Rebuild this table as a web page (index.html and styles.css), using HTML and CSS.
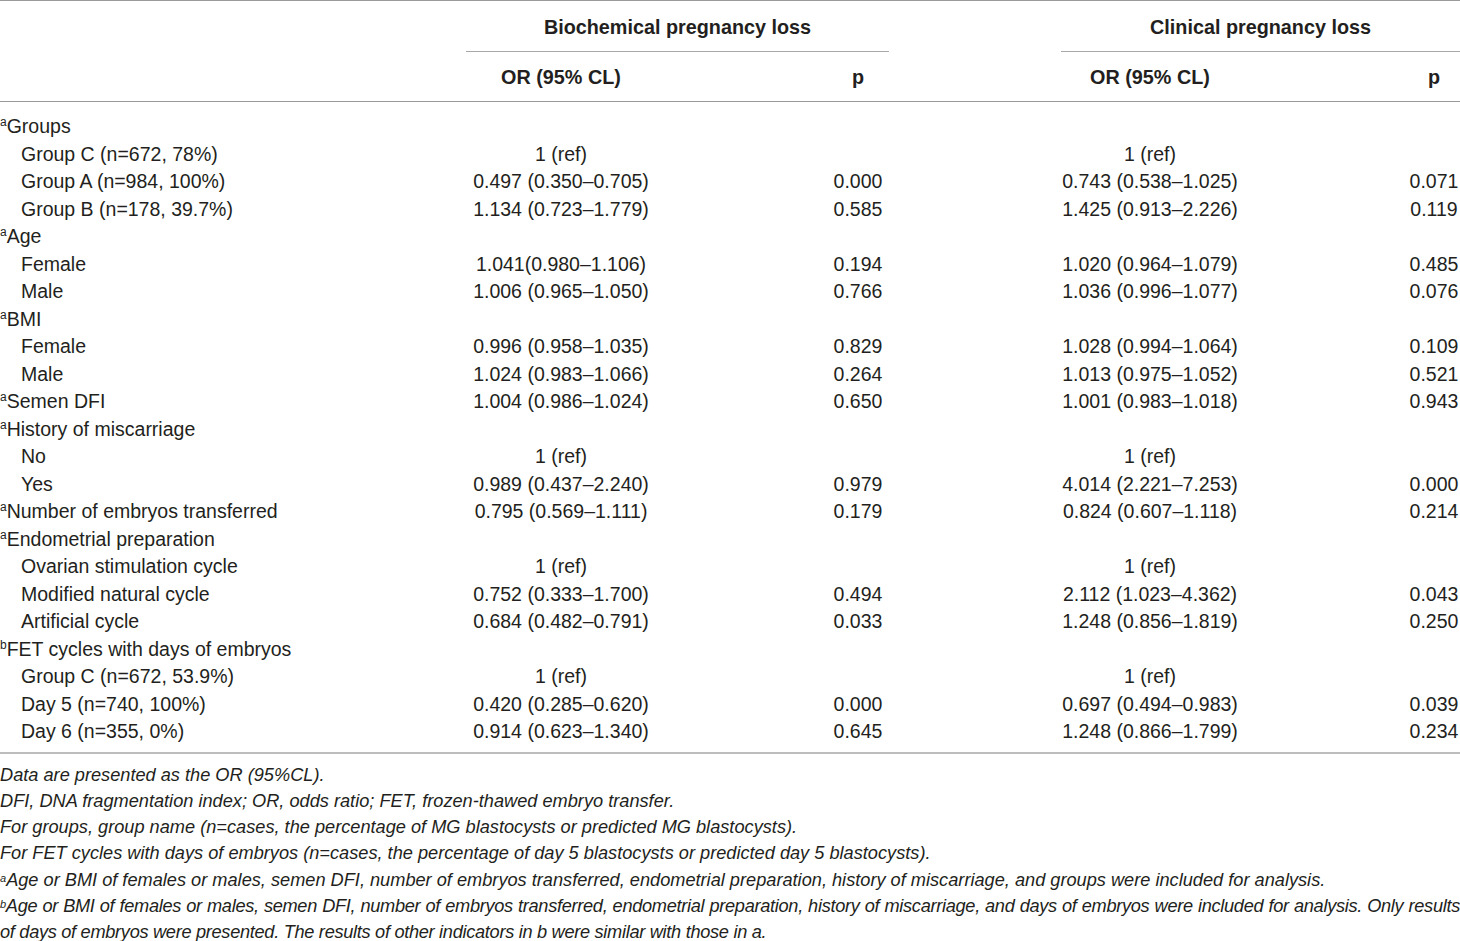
FILE: index.html
```html
<!DOCTYPE html>
<html lang="en">
<head>
<meta charset="utf-8">
<title>Table</title>
<link rel="stylesheet" href="styles.css">
</head>
<body>
<div class="page">
<table class="tbl">
  <colgroup>
    <col class="c-label">
    <col class="c-or1">
    <col class="c-sp1">
    <col class="c-p1">
    <col class="c-gap">
    <col class="c-or2">
    <col class="c-sp2">
    <col class="c-p2">
  </colgroup>
  <thead>
    <tr class="h1">
      <th></th>
      <th colspan="3" class="grp">Biochemical pregnancy loss</th>
      <th></th>
      <th colspan="3" class="grp">Clinical pregnancy loss</th>
    </tr>
    <tr class="h2">
      <th></th>
      <th class="ctr">OR (95% CL)</th>
      <th></th>
      <th class="ctr">p</th>
      <th></th>
      <th class="ctr">OR (95% CL)</th>
      <th></th>
      <th class="ctr">p</th>
    </tr>
  </thead>
  <tbody>
    <tr class="first"><td class="lbl"><sup>a</sup>Groups</td><td></td><td></td><td></td><td></td><td></td><td></td><td></td></tr>
    <tr><td class="lbl in">Group C (n=672, 78%)</td><td class="ctr">1 (ref)</td><td></td><td></td><td></td><td class="ctr">1 (ref)</td><td></td><td></td></tr>
    <tr><td class="lbl in">Group A (n=984, 100%)</td><td class="ctr">0.497 (0.350–0.705)</td><td></td><td class="ctr">0.000</td><td></td><td class="ctr">0.743 (0.538–1.025)</td><td></td><td class="ctr">0.071</td></tr>
    <tr><td class="lbl in">Group B (n=178, 39.7%)</td><td class="ctr">1.134 (0.723–1.779)</td><td></td><td class="ctr">0.585</td><td></td><td class="ctr">1.425 (0.913–2.226)</td><td></td><td class="ctr">0.119</td></tr>
    <tr><td class="lbl"><sup>a</sup>Age</td><td></td><td></td><td></td><td></td><td></td><td></td><td></td></tr>
    <tr><td class="lbl in">Female</td><td class="ctr">1.041(0.980–1.106)</td><td></td><td class="ctr">0.194</td><td></td><td class="ctr">1.020 (0.964–1.079)</td><td></td><td class="ctr">0.485</td></tr>
    <tr><td class="lbl in">Male</td><td class="ctr">1.006 (0.965–1.050)</td><td></td><td class="ctr">0.766</td><td></td><td class="ctr">1.036 (0.996–1.077)</td><td></td><td class="ctr">0.076</td></tr>
    <tr><td class="lbl"><sup>a</sup>BMI</td><td></td><td></td><td></td><td></td><td></td><td></td><td></td></tr>
    <tr><td class="lbl in">Female</td><td class="ctr">0.996 (0.958–1.035)</td><td></td><td class="ctr">0.829</td><td></td><td class="ctr">1.028 (0.994–1.064)</td><td></td><td class="ctr">0.109</td></tr>
    <tr><td class="lbl in">Male</td><td class="ctr">1.024 (0.983–1.066)</td><td></td><td class="ctr">0.264</td><td></td><td class="ctr">1.013 (0.975–1.052)</td><td></td><td class="ctr">0.521</td></tr>
    <tr><td class="lbl"><sup>a</sup>Semen DFI</td><td class="ctr">1.004 (0.986–1.024)</td><td></td><td class="ctr">0.650</td><td></td><td class="ctr">1.001 (0.983–1.018)</td><td></td><td class="ctr">0.943</td></tr>
    <tr><td class="lbl"><sup>a</sup>History of miscarriage</td><td></td><td></td><td></td><td></td><td></td><td></td><td></td></tr>
    <tr><td class="lbl in">No</td><td class="ctr">1 (ref)</td><td></td><td></td><td></td><td class="ctr">1 (ref)</td><td></td><td></td></tr>
    <tr><td class="lbl in">Yes</td><td class="ctr">0.989 (0.437–2.240)</td><td></td><td class="ctr">0.979</td><td></td><td class="ctr">4.014 (2.221–7.253)</td><td></td><td class="ctr">0.000</td></tr>
    <tr><td class="lbl"><sup>a</sup>Number of embryos transferred</td><td class="ctr">0.795 (0.569–1.111)</td><td></td><td class="ctr">0.179</td><td></td><td class="ctr">0.824 (0.607–1.118)</td><td></td><td class="ctr">0.214</td></tr>
    <tr><td class="lbl"><sup>a</sup>Endometrial preparation</td><td></td><td></td><td></td><td></td><td></td><td></td><td></td></tr>
    <tr><td class="lbl in">Ovarian stimulation cycle</td><td class="ctr">1 (ref)</td><td></td><td></td><td></td><td class="ctr">1 (ref)</td><td></td><td></td></tr>
    <tr><td class="lbl in">Modified natural cycle</td><td class="ctr">0.752 (0.333–1.700)</td><td></td><td class="ctr">0.494</td><td></td><td class="ctr">2.112 (1.023–4.362)</td><td></td><td class="ctr">0.043</td></tr>
    <tr><td class="lbl in">Artificial cycle</td><td class="ctr">0.684 (0.482–0.791)</td><td></td><td class="ctr">0.033</td><td></td><td class="ctr">1.248 (0.856–1.819)</td><td></td><td class="ctr">0.250</td></tr>
    <tr><td class="lbl"><sup>b</sup>FET cycles with days of embryos</td><td></td><td></td><td></td><td></td><td></td><td></td><td></td></tr>
    <tr><td class="lbl in">Group C (n=672, 53.9%)</td><td class="ctr">1 (ref)</td><td></td><td></td><td></td><td class="ctr">1 (ref)</td><td></td><td></td></tr>
    <tr><td class="lbl in">Day 5 (n=740, 100%)</td><td class="ctr">0.420 (0.285–0.620)</td><td></td><td class="ctr">0.000</td><td></td><td class="ctr">0.697 (0.494–0.983)</td><td></td><td class="ctr">0.039</td></tr>
    <tr class="last"><td class="lbl in">Day 6 (n=355, 0%)</td><td class="ctr">0.914 (0.623–1.340)</td><td></td><td class="ctr">0.645</td><td></td><td class="ctr">1.248 (0.866–1.799)</td><td></td><td class="ctr">0.234</td></tr>
  </tbody>
</table>
<div class="notes">
  <p>Data are presented as the OR (95%CL).</p>
  <p>DFI, DNA fragmentation index; OR, odds ratio; FET, frozen-thawed embryo transfer.</p>
  <p>For groups, group name (n=cases, the percentage of MG blastocysts or predicted MG blastocysts).</p>
  <p>For FET cycles with days of embryos (n=cases, the percentage of day 5 blastocysts or predicted day 5 blastocysts).</p>
  <p><sup>a</sup>Age or BMI of females or males, semen DFI, number of embryos transferred, endometrial preparation, history of miscarriage, and groups were included for analysis.</p>
  <p class="just"><sup>b</sup>Age or BMI of females or males, semen DFI, number of embryos transferred, endometrial preparation, history of miscarriage, and days of embryos were included for analysis. Only results of&nbsp;days of embryos were presented. The results of other indicators in b were similar with those in a.</p>
</div>
</div>
</body>
</html>
```
FILE: styles.css
```css
html, body {
  margin: 0;
  padding: 0;
  background: #ffffff;
  overflow: hidden;
}

.page {
  width: 1460px;
  color: #231f20;
  font-family: "Liberation Sans", Arial, sans-serif;
}

.tbl {
  width: 1460px;
  table-layout: fixed;
  border-collapse: collapse;
  border-top: 1px solid #9a9a9a;
  font-size: 19.5px;
}

.c-label { width: 466px; }
.c-or1 { width: 190px; }
.c-sp1 { width: 171px; }
.c-p1 { width: 62px; }
.c-gap { width: 172px; }
.c-or2 { width: 178px; }
.c-sp2 { width: 169px; }
.c-p2 { width: 52px; }

.tbl th, .tbl td {
  padding: 0;
  white-space: nowrap;
}

.tbl th {
  font-weight: bold;
  font-size: 19.8px;
  line-height: 24px;
  box-sizing: border-box;
  vertical-align: middle;
}

.tbl .h1 th {
  height: 51px;
  padding-top: 2px;
}

.tbl .h2 th {
  height: 50px;
  padding-top: 0;
  border-bottom: 1px solid #9a9a9a;
}

.tbl .grp {
  text-align: center;
  border-bottom: 1px solid #a8a8a8;
}

.tbl td {
  height: 27.5px;
  line-height: 27.5px;
  vertical-align: middle;
}

.tbl tbody .first td {
  padding-top: 11px;
}

.tbl tbody .last td {
  padding-bottom: 6px;
  border-bottom: 2px solid #bdbdbd;
}

.ctr { text-align: center; }

.lbl { text-align: left; }
.lbl.in { padding-left: 21px; }

sup {
  font-size: 12px;
  line-height: 0;
  vertical-align: 7px;
}

.notes {
  padding-top: 8px;
  font-style: italic;
  font-size: 18.2px;
}

.notes p {
  margin: 0;
  line-height: 26.3px;
}

.notes sup {
  font-size: 11px;
  vertical-align: 4px;
}

.notes .just {
  text-align: justify;
  letter-spacing: -0.3px;
}
```
